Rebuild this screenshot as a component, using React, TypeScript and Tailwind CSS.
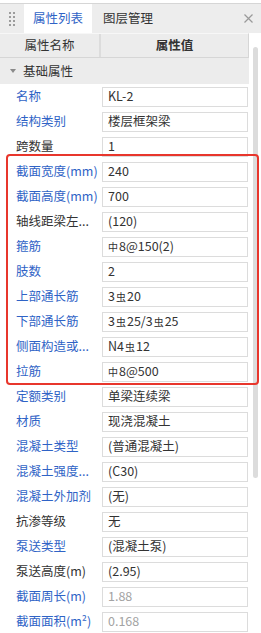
const BLUE = 'text-[#2f63c6]';

type Row = { label: string; value: React.ReactNode; link?: boolean; muted?: boolean };

function Hpb() {
  return <span className="text-[10px] mr-[1px]">中</span>;
}

function Hrb() {
  return <span className="text-[10px] mx-[1px]">虫</span>;
}

const ROWS: Row[] = [
  { label: '名称', value: 'KL-2', link: true },
  { label: '结构类别', value: '楼层框架梁', link: true },
  { label: '跨数量', value: '1' },
  { label: '截面宽度(mm)', value: '240', link: true },
  { label: '截面高度(mm)', value: '700', link: true },
  { label: '轴线距梁左...', value: '(120)' },
  { label: '箍筋', value: <><Hpb />8@150(2)</>, link: true },
  { label: '肢数', value: '2', link: true },
  { label: '上部通长筋', value: <>3<Hrb />20</>, link: true },
  { label: '下部通长筋', value: <>3<Hrb />25/3<Hrb />25</>, link: true },
  { label: '侧面构造或...', value: <>N4<Hrb />12</>, link: true },
  { label: '拉筋', value: <><Hpb />8@500</>, link: true },
  { label: '定额类别', value: '单梁连续梁', link: true },
  { label: '材质', value: '现浇混凝土', link: true },
  { label: '混凝土类型', value: '(普通混凝土)', link: true },
  { label: '混凝土强度...', value: '(C30)', link: true },
  { label: '混凝土外加剂', value: '(无)', link: true },
  { label: '抗渗等级', value: '无' },
  { label: '泵送类型', value: '(混凝土泵)', link: true },
  { label: '泵送高度(m)', value: '(2.95)' },
  { label: '截面周长(m)', value: '1.88', link: true, muted: true },
  { label: '截面面积(m²)', value: '0.168', link: true, muted: true },
];

function Grip() {
  return (
    <div className="grid grid-cols-2 gap-x-[2px] gap-y-[2px]">
      {Array.from({ length: 8 }).map((_, i) => (
        <span key={i} className="block w-[2px] h-[2px] bg-[#9c9c9c]" />
      ))}
    </div>
  );
}

export default function App() {
  return (
    <div
      className="relative w-[261px] h-[633px] overflow-hidden bg-white text-[12.5px] text-[#333]"
      style={{ fontFamily: "'Noto Sans CJK SC', 'Noto Sans', sans-serif" }}
    >
      <div className="h-[3px]" />
      {/* tab strip */}
      <div className="flex h-[30px] border-t border-[#d6d6d6] bg-[#ededed]">
        <div className="w-[24px] flex items-center justify-center">
          <Grip />
        </div>
        <div className={`w-[68px] bg-white flex items-center justify-center ${BLUE}`}>属性列表</div>
        <div className="px-[11px] flex items-center">图层管理</div>
        <div className="flex-1" />
        <div className="w-[26px] flex items-center justify-center">
          <svg width="9" height="9" viewBox="0 0 9 9" stroke="#9a9a9a" strokeWidth="1.2">
            <path d="M0.5 0.5 L8.5 8.5 M8.5 0.5 L0.5 8.5" />
          </svg>
        </div>
      </div>

      <div className="flex">
        <div className="w-[249px]">
          {/* column header */}
          <div className="flex h-[25px] bg-[#ececec] border-t border-b border-r border-t-[#f7f7f7] border-[#d6d6d6]">
            <div className="w-[101px] border-r-2 border-[#dcdcdc] flex items-center justify-center">属性名称</div>
            <div className="flex-1 flex items-center justify-center font-bold">属性值</div>
          </div>
          {/* group */}
          <div className="flex items-center h-[26px] bg-[#ececec]">
            <svg className="ml-[10px] mr-[7px]" width="6" height="4" viewBox="0 0 6 4">
              <path d="M0 0 H6 L3 4 Z" fill="#8a8a8a" />
            </svg>
            <span>基础属性</span>
          </div>
          {ROWS.map((r) => (
            <div key={r.label} className="flex items-center h-[25px]">
              <div className={`w-[102px] pl-[16px] whitespace-nowrap overflow-hidden ${r.link ? BLUE : 'text-[#333]'}`}>
                {r.label}
              </div>
              <div
                className={`w-[146px] h-[20px] border border-[#dcdcdc] px-[5px] flex items-center whitespace-nowrap ${
                  r.muted ? 'text-[#a3a3a3]' : 'text-[#333]'
                }`}
              >
                {r.value}
              </div>
            </div>
          ))}
        </div>
        <div className="flex-1 pt-[14px] pl-[4px]">
          <div className="w-[5px] h-[431px] rounded-full bg-[#dcdcdc]" />
        </div>
      </div>

      {/* highlight frame */}
      <div className="absolute left-[6px] top-[154px] w-[253px] h-[231px] border-2 border-[#e8362c] rounded-[4px] pointer-events-none" />
    </div>
  );
}
